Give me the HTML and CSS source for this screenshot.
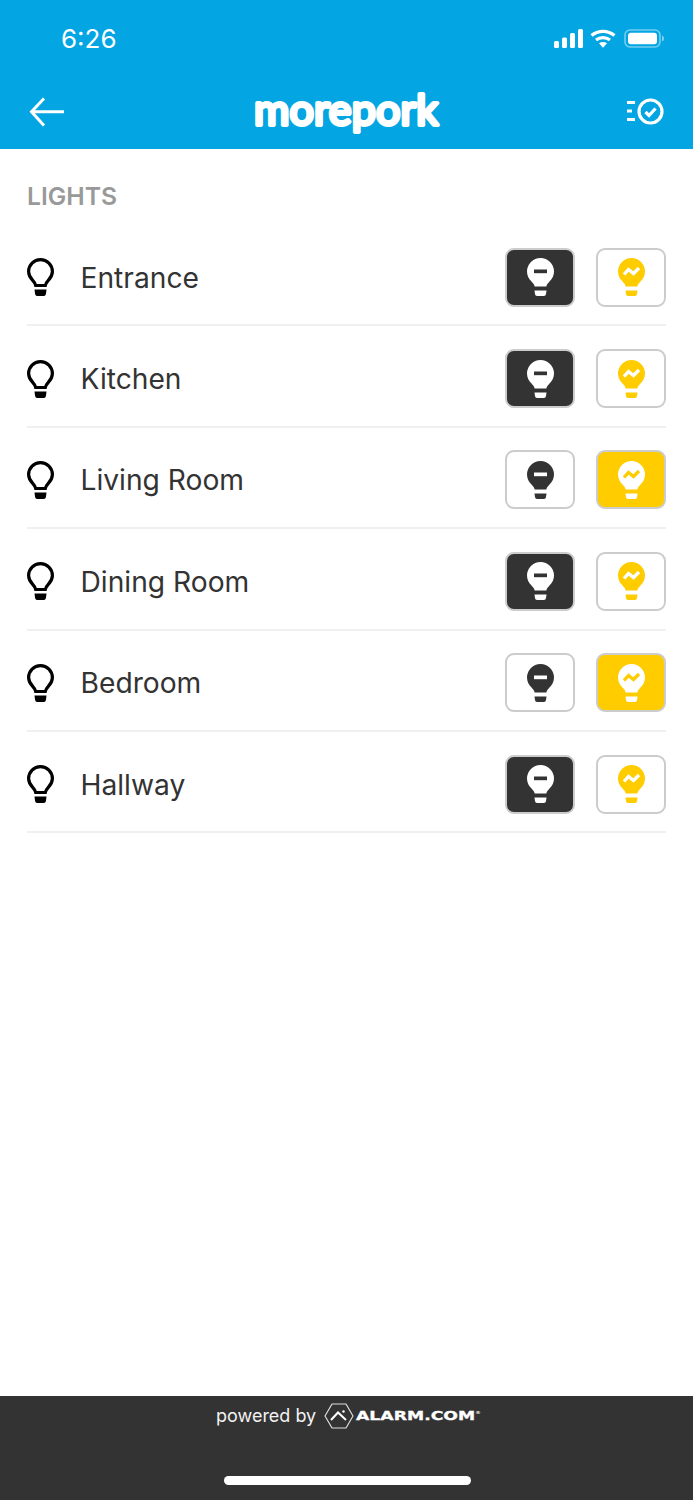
FILE: index.html
```html
<!DOCTYPE html>
<html lang="en">
<head>
<meta charset="utf-8">
<title>Lights</title>
<link rel="stylesheet" href="styles.css">
</head>
<body>
<svg class="defs" width="0" height="0" aria-hidden="true">
  <symbol id="bulb-off" viewBox="0 0 27 38">
    <path fill="currentColor" d="M13.5 0A13.5 13.5 0 0 1 27 13.5C27 18 25 21 22.5 23.5C20.5 25.5 19.8 26.8 19.3 28.5H7.7C7.2 26.8 6.500 25.500 4.500 23.500C2 21 0 18 0 13.500A13.500 13.500 0 0 1 13.500 0Z"/>
    <path fill="currentColor" d="M7.500 32.500H19.500L19 36C18.800 37.200 18 38 17 38H10C9 38 8.200 37.200 8 36Z"/>
    <rect x="7" y="11.500" width="13" height="3.700" fill="var(--cut)"/>
  </symbol>
  <symbol id="bulb-on" viewBox="0 0 27 38">
    <path fill="currentColor" d="M13.5 0A13.5 13.5 0 0 1 27 13.5C27 18 25 21 22.5 23.5C20.5 25.5 19.8 26.8 19.3 28.5H7.7C7.2 26.8 6.500 25.500 4.500 23.500C2 21 0 18 0 13.500A13.500 13.500 0 0 1 13.500 0Z"/>
    <path fill="currentColor" d="M7.500 32.500H19.500L19 36C18.800 37.200 18 38 17 38H10C9 38 8.200 37.200 8 36Z"/>
    <path fill="none" stroke="var(--cut)" stroke-width="3.300" d="M6 16.500L10.500 11.500L15.500 15.500L21 10"/>
  </symbol>
  <symbol id="bulb-line" viewBox="0 0 27 38">
    <path fill="none" stroke="currentColor" stroke-width="3.200" d="M13.500 1.600A11.900 11.900 0 0 1 25.400 13.500C25.400 17.500 23.500 20 21.300 22.300C19.500 24.200 18.700 25.500 18.300 27.500H8.700C8.300 25.500 7.500 24.200 5.700 22.300C3.500 20 1.600 17.500 1.600 13.500A11.900 11.900 0 0 1 13.500 1.600Z"/>
    <path fill="currentColor" d="M7.500 31.500H19.500L19 35.500C18.800 37 18 38 17 38H10C9 38 8.200 37 8 35.500Z"/>
  </symbol>
</svg>

<div class="app">
  <header class="top">
    <div class="status">
      <span class="time">6:26</span>
      <div class="status-icons">
        <svg class="signal" viewBox="0 0 29 19" width="29" height="19">
          <rect x="0" y="12" width="5" height="7" rx="1.500"/>
          <rect x="8" y="8.500" width="5" height="10.500" rx="1.500"/>
          <rect x="16" y="4" width="5" height="15" rx="1.500"/>
          <rect x="24" y="0" width="5" height="19" rx="1.500"/>
        </svg>
        <svg class="wifi" viewBox="0 0 26 19" width="26" height="19">
          <path d="M1.500 6.500C8 .9 18 .9 24.500 6.500" fill="none" stroke="#fff" stroke-width="3.200"/>
          <path d="M6 11C10 7.700 16 7.700 20 11" fill="none" stroke="#fff" stroke-width="3.200"/>
          <path d="M9 14.200C11.500 12.500 14.500 12.500 17 14.200L13 18.800Z" fill="#fff"/>
        </svg>
        <svg class="battery" viewBox="0 0 40 19" width="40" height="19">
          <rect x="1" y="1" width="35" height="17" rx="5" fill="none" stroke="#fff" stroke-opacity=".45" stroke-width="1.600"/>
          <rect x="4" y="3.800" width="29" height="11.400" rx="3" fill="#fff"/>
          <path d="M38 6.500C39.300 7 40 8 40 9.500S39.300 12 38 12.500Z" fill="#fff" fill-opacity=".5"/>
        </svg>
      </div>
    </div>
    <nav class="nav">
      <svg class="back" viewBox="0 0 36 30" width="36" height="30">
        <path d="M35 14.800H3M15 1.500L2.500 14.800L15 28.500" fill="none" stroke="#fff" stroke-width="3"/>
      </svg>
      <svg class="logo" viewBox="0 0 196 66" width="196" height="66" role="img" aria-label="morepork">
        <text class="logo-text" x="6" y="46" textLength="184" lengthAdjust="spacing">morepork</text>
      </svg>
      <svg class="tasks" viewBox="0 0 38 28" width="38" height="28">
        <path d="M1 4.500H9M1 13H6M1 21.500H9" fill="none" stroke="#fff" stroke-width="3"/>
        <circle cx="24.500" cy="13.500" r="11.500" fill="none" stroke="#fff" stroke-width="3.200"/>
        <path d="M19.500 14L23 17.500L29.500 10.500" fill="none" stroke="#fff" stroke-width="3.200"/>
      </svg>
    </nav>
  </header>

  <main class="content">
    <h2 class="section">LIGHTS</h2>
    <ul class="list">
      <li class="row">
        <svg class="row-icon"><use href="#bulb-line"/></svg>
        <span class="name">Entrance</span>
        <div class="btns">
          <button class="btn dark"><svg class="glyph"><use href="#bulb-off"/></svg></button>
          <button class="btn plain-on"><svg class="glyph"><use href="#bulb-on"/></svg></button>
        </div>
      </li>
      <li class="row">
        <svg class="row-icon"><use href="#bulb-line"/></svg>
        <span class="name">Kitchen</span>
        <div class="btns">
          <button class="btn dark"><svg class="glyph"><use href="#bulb-off"/></svg></button>
          <button class="btn plain-on"><svg class="glyph"><use href="#bulb-on"/></svg></button>
        </div>
      </li>
      <li class="row">
        <svg class="row-icon"><use href="#bulb-line"/></svg>
        <span class="name">Living Room</span>
        <div class="btns">
          <button class="btn plain-off"><svg class="glyph"><use href="#bulb-off"/></svg></button>
          <button class="btn yellow"><svg class="glyph"><use href="#bulb-on"/></svg></button>
        </div>
      </li>
      <li class="row">
        <svg class="row-icon"><use href="#bulb-line"/></svg>
        <span class="name">Dining Room</span>
        <div class="btns">
          <button class="btn dark"><svg class="glyph"><use href="#bulb-off"/></svg></button>
          <button class="btn plain-on"><svg class="glyph"><use href="#bulb-on"/></svg></button>
        </div>
      </li>
      <li class="row">
        <svg class="row-icon"><use href="#bulb-line"/></svg>
        <span class="name">Bedroom</span>
        <div class="btns">
          <button class="btn plain-off"><svg class="glyph"><use href="#bulb-off"/></svg></button>
          <button class="btn yellow"><svg class="glyph"><use href="#bulb-on"/></svg></button>
        </div>
      </li>
      <li class="row">
        <svg class="row-icon"><use href="#bulb-line"/></svg>
        <span class="name">Hallway</span>
        <div class="btns">
          <button class="btn dark"><svg class="glyph"><use href="#bulb-off"/></svg></button>
          <button class="btn plain-on"><svg class="glyph"><use href="#bulb-on"/></svg></button>
        </div>
      </li>
    </ul>
  </main>

  <footer class="foot">
    <div class="powered">
      <span class="by">powered by</span>
      <svg class="alarm-mark" viewBox="0 0 30 26" width="30" height="26">
        <path d="M8 1H22L29 13L22 25H8L1 13Z" fill="none" stroke="#ddd" stroke-width="1.200" stroke-linejoin="round"/>
        <path d="M7 17L14 9.500L22 17" fill="none" stroke="#fff" stroke-width="2"/>
        <circle cx="19.500" cy="8.500" r="1.200" fill="#fff"/>
      </svg>
      <span class="alarm">ALARM.COM<sup class="reg">®</sup></span>
    </div>
    <div class="home"></div>
  </footer>
</div>
</body>
</html>
```

FILE: styles.css
```css
* { box-sizing: border-box; }
html, body { margin: 0; padding: 0; background: #fff; }
body { font-family: Inter, "Liberation Sans", sans-serif; }
.defs { position: absolute; }

.app { width: 693px; height: 1500px; display: flex; flex-direction: column; overflow: hidden; }

.top { height: 149px; background: #03a5e3; color: #fff; flex: none; }
.status { height: 75px; display: flex; justify-content: space-between; align-items: flex-start; padding: 23px 29px 0 61px; }
.time { font-size: 26px; line-height: 31px; font-weight: 400; }
.status-icons { display: flex; gap: 7px; padding-top: 6px; }
.signal { fill: #fff; }
.battery { margin-left: 1px; }

.nav { height: 74px; display: flex; justify-content: space-between; align-items: center; padding: 0 29px 1px 29px; }
.logo { flex: none; margin-left: 1px; overflow: visible; }
.logo-text { font-family: Lato, sans-serif; font-weight: 400; font-size: 43px; fill: #fff; stroke: #fff; stroke-width: 3.800px; stroke-linejoin: round; stroke-linecap: round; }

.content { flex: 1; padding: 0 27px; }
.section { margin: 0; height: 76px; padding-top: 32px; font-size: 24.700px; line-height: 30px; font-weight: 600; color: #999; }
.list { list-style: none; margin: 0; padding: 0; }
.row { height: 101.400px; padding-top: 5px; display: flex; align-items: center; border-bottom: 2px solid #f0f0f0; }
.row-icon { width: 27px; height: 38px; color: #000; flex: none; }
.name { flex: 1; margin-left: 26.500px; padding-top: 1px; font-size: 28.200px; line-height: 34px; color: #333; }
.btns { display: flex; gap: 21px; }
.btn { width: 70px; height: 59px; padding: 0; border-radius: 9px; border: 2px solid #ccc; background: #fff; display: flex; align-items: center; justify-content: center; }
.glyph { width: 27px; height: 38px; }
.dark { background: #333; color: #fff; --cut: #333; }
.plain-on { color: #ffcc00; --cut: #fff; }
.plain-off { color: #333; --cut: #fff; }
.yellow { background: #ffcc00; color: #fff; --cut: #ffcc00; }

.foot { height: 104px; flex: none; background: #333; color: #fff; display: flex; flex-direction: column; align-items: center; }
.powered { height: 80px; width: 100%; display: flex; align-items: flex-start; padding: 7px 0 0 216px; }
.by { font-size: 18px; line-height: 26px; color: #f2f2f2; }
.alarm-mark { margin-left: 8px; flex: none; }
.alarm { font-family: "DejaVu Sans", sans-serif; font-weight: 700; font-size: 12.500px; line-height: 26px; margin-left: 2px; color: #fff; -webkit-text-stroke: .3px #fff; transform: scaleX(1.380); transform-origin: left center; white-space: nowrap; }
.reg { font-size: 4px; line-height: 0; vertical-align: 6px; -webkit-text-stroke: 0; }
.home { width: 247px; height: 9px; margin-left: 1px; border-radius: 5px; background: #fff; }
```
